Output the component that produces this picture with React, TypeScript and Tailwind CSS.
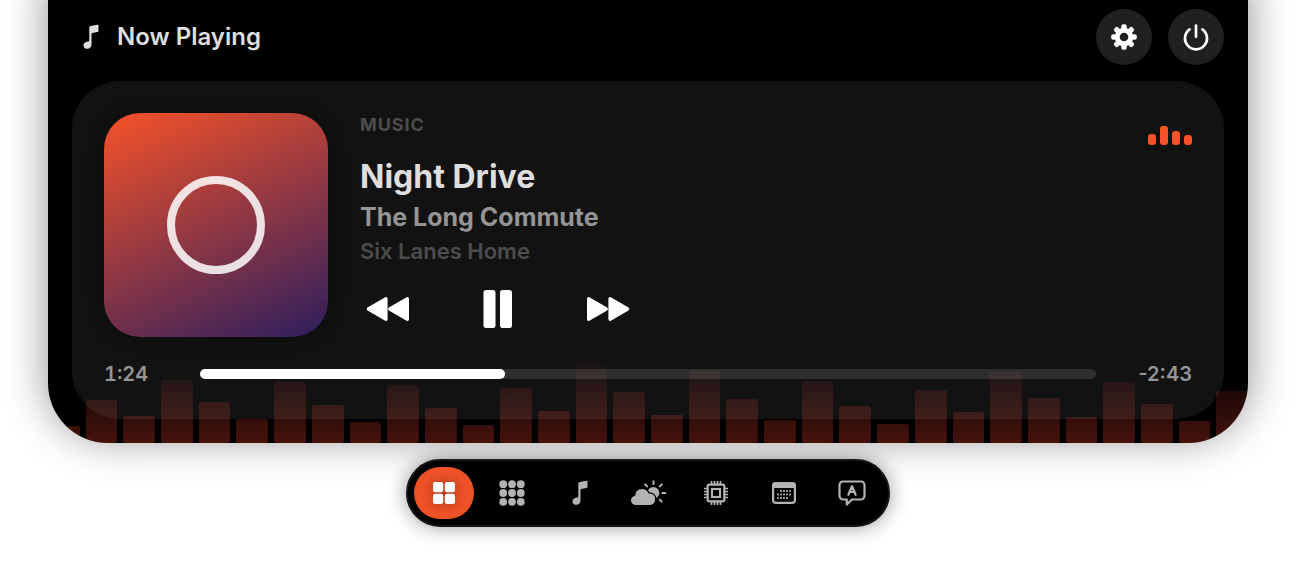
import type { ReactNode } from "react";

const barHeights = [
  17, 43, 27, 63, 41, 24, 61, 38, 21, 58, 35, 18, 55, 32, 80, 51,
  28, 73, 44, 23, 62, 37, 19, 53, 31, 71, 45, 26, 61, 39, 22, 52,
];

function NoteIcon({ className }: { className?: string }) {
  return (
    <svg viewBox="0 0 16 26" className={className} fill="currentColor" aria-hidden="true">
      <path d="M6.300 3.800c0-1 .6-1.600 1.600-1.800l6.200-1.300c.9-.2 1.400.2 1.400 1v5c0 .8-.4 1.200-1.200 1.400l-4.900 1c-.7.200-.9.500-.9 1.200v10c0 2.800-1.700 4.500-4.200 4.500-2.200 0-3.800-1.400-3.800-3.400s1.400-3.200 3.500-3.700l1.400-.3c.7-.2.9-.5.900-1.100z" />
    </svg>
  );
}

function GearIcon() {
  const teeth = [0, 45, 90, 135];
  return (
    <svg viewBox="0 0 26 26" className="size-[26px]" aria-hidden="true">
      {teeth.map((angle) => (
        <rect key={angle} x="10.300" y="0.200" width="5.400" height="25.600" rx="2" fill="white" transform={`rotate(${angle} 13 13)`} />
      ))}
      <circle cx="13" cy="13" r="9.200" fill="white" />
      <circle cx="13" cy="13" r="4.300" fill="#202020" />
    </svg>
  );
}

function PowerIcon() {
  return (
    <svg viewBox="0 0 28 28" className="size-7" fill="none" stroke="white" strokeWidth="2.700" strokeLinecap="round" aria-hidden="true">
      <path d="M14 2.600v11.200" />
      <path d="M7.600 6.400a11 11 0 1 0 12.800 0" />
    </svg>
  );
}

function RewindIcon({ className }: { className?: string }) {
  return (
    <svg viewBox="0 0 44 26" className={className} fill="white" stroke="white" strokeWidth="3.200" strokeLinejoin="round" aria-hidden="true">
      <path d="M2.300 13 20 2.700v20.600zM23.700 13 41.400 2.700v20.600z" />
    </svg>
  );
}

function PauseIcon() {
  return (
    <svg viewBox="0 0 30 38" className="h-[38px] w-[30px]" fill="white" aria-hidden="true">
      <rect x="0.500" y="0" width="12" height="38" rx="2.800" />
      <rect x="17" y="0" width="12" height="38" rx="2.800" />
    </svg>
  );
}

function TilesIcon() {
  return (
    <svg viewBox="0 0 22 22" className="size-[22px] drop-shadow-[0_0_6px_rgba(0,0,0,0.35)]" fill="currentColor" aria-hidden="true">
      <rect width="10.200" height="10.200" rx="2.300" />
      <rect x="11.800" width="10.200" height="10.200" rx="2.300" />
      <rect y="11.800" width="10.200" height="10.200" rx="2.300" />
      <rect x="11.800" y="11.800" width="10.200" height="10.200" rx="2.300" />
    </svg>
  );
}

function DotsIcon() {
  const spots = [4.200, 13, 21.800];
  return (
    <svg viewBox="0 0 26 26" className="size-[26px]" fill="currentColor" aria-hidden="true">
      {spots.map((cy) => spots.map((cx) => <circle key={`${cx}-${cy}`} cx={cx} cy={cy} r="3.900" />))}
    </svg>
  );
}

function WeatherIcon() {
  return (
    <svg viewBox="0 0 36 26" className="h-[26px] w-9" aria-hidden="true">
      <g stroke="currentColor" strokeWidth="2" strokeLinecap="round">
        <path d="M23.500 1.200v2.800M15.200 4.400l1.900 2M31.800 4.400l-2 2M32.400 13h2.800M29.800 19.600l1.900 2" />
      </g>
      <circle cx="23.300" cy="13" r="6" fill="currentColor" />
      <path
        d="M6.300 25.800C2.800 25.800.3 23.600.3 20.500c0-2.600 1.700-4.600 4.200-5.100.5-4.200 3.600-7 7.600-7 3.200 0 5.600 1.600 6.900 4.500 4.100.1 6.900 2.800 6.900 6.400 0 3.700-2.900 6.500-6.800 6.500z"
        fill="currentColor"
        stroke="black"
        strokeWidth="1.400"
      />
    </svg>
  );
}

function ChipIcon() {
  return (
    <svg viewBox="0 0 24 24" className="size-6" fill="none" stroke="currentColor" aria-hidden="true">
      <rect x="3.700" y="3.700" width="16.600" height="16.600" rx="1.500" strokeWidth="2.200" />
      <rect x="8" y="8" width="8" height="8" strokeWidth="2.100" />
      <path
        d="M7.500 0v3M10.500 0v3M13.500 0v3M16.500 0v3M7.500 21v3M10.500 21v3M13.500 21v3M16.500 21v3M0 7.500h3M0 10.500h3M0 13.500h3M0 16.500h3M21 7.500h3M21 10.500h3M21 13.500h3M21 16.500h3"
        strokeWidth="1.700"
      />
    </svg>
  );
}

function CalendarIcon() {
  const rows = [
    { y: 8.500, columns: [9, 12, 15, 18] },
    { y: 12, columns: [6, 9, 12, 15, 18] },
    { y: 15.500, columns: [6, 9, 12, 15] },
  ];
  return (
    <svg viewBox="0 0 24 22" className="h-[22px] w-6" aria-hidden="true">
      <rect x="1.100" y="1.100" width="21.800" height="19.800" rx="3" fill="none" stroke="currentColor" strokeWidth="2.200" />
      <path d="M0 6V4a4 4 0 0 1 4-4h16a4 4 0 0 1 4 4v2z" fill="currentColor" />
      {rows.map((row) =>
        row.columns.map((x) => (
          <rect key={`${x}-${row.y}`} x={x - 0.900} y={row.y - 0.400} width="1.800" height="1.800" fill="currentColor" />
        ))
      )}
    </svg>
  );
}

function CaptionIcon() {
  return (
    <svg viewBox="0 0 28 26" className="h-[26px] w-7" fill="none" stroke="currentColor" strokeWidth="2.200" strokeLinejoin="round" strokeLinecap="round" aria-hidden="true">
      <path d="M5.200 1.500h17.600a3.700 3.700 0 0 1 3.700 3.700v10.600a3.700 3.700 0 0 1-3.700 3.700H14l-5.200 5v-5H5.200a3.700 3.700 0 0 1-3.700-3.700V5.200a3.700 3.700 0 0 1 3.700-3.700z" />
      <path d="M10.300 14.800 14 6.200l3.700 8.600M11.600 12h4.800" />
    </svg>
  );
}

const tabs: { label: string; icon: ReactNode }[] = [
  { label: "Dashboard", icon: <TilesIcon /> },
  { label: "Apps", icon: <DotsIcon /> },
  { label: "Music", icon: <NoteIcon className="h-[26px] w-4" /> },
  { label: "Weather", icon: <WeatherIcon /> },
  { label: "System", icon: <ChipIcon /> },
  { label: "Calendar", icon: <CalendarIcon /> },
  { label: "Captions", icon: <CaptionIcon /> },
];

function Spectrum() {
  return (
    <div className="absolute inset-x-0 bottom-0 flex items-end gap-1.5" aria-hidden="true">
      {barHeights.map((height, index) => (
        <div
          key={index}
          className="flex-1 rounded-xs bg-linear-to-t from-[#f0402f]/29 to-[#f0402f]/0 bg-[length:100%_88px] bg-bottom bg-no-repeat"
          style={{ height }}
        />
      ))}
    </div>
  );
}

export default function App() {
  return (
    <div className="min-h-screen overflow-hidden bg-white px-12 pb-12 font-['Inter',sans-serif]">
      <main className="relative -mt-4 overflow-hidden rounded-b-[60px] bg-black px-6 pt-[25px] pb-6 shadow-[0_-6px_44px_rgba(0,0,0,0.45)]">
        <Spectrum />

        <header className="relative flex items-center justify-between">
          <div className="flex items-center gap-[18px] pl-[11px] text-[#dedede]">
            <NoteIcon className="h-[26px] w-4" />
            <h1 className="text-2xl font-semibold">Now Playing</h1>
          </div>
          <div className="flex gap-4">
            <button type="button" aria-label="Settings" className="flex size-14 items-center justify-center rounded-full bg-[#202020]">
              <GearIcon />
            </button>
            <button type="button" aria-label="Power" className="flex size-14 items-center justify-center rounded-full bg-[#202020]">
              <PowerIcon />
            </button>
          </div>
        </header>

        <section className="relative mt-4 rounded-[48px] bg-white/7 px-8 pt-8 pb-8">
          <div className="flex gap-8">
            <div className="flex size-56 items-center justify-center rounded-[36px] bg-linear-[155deg] from-[#f65228] to-[#2d1e5e] shadow-[0_0_16px_rgba(0,0,0,0.4)]">
              <div className="size-[98px] rounded-full border-8 border-white/85" />
            </div>

            <div className="flex-1">
              <p className="text-lg leading-6 font-bold tracking-wider text-[#4c4c4c]">MUSIC</p>
              <h2 className="mt-5 text-[32px] leading-10 font-bold text-[#dedede]">Night Drive</h2>
              <p className="mt-1 text-[25px] leading-8 font-bold text-[#959595]">The Long Commute</p>
              <p className="mt-1 text-[22px] leading-7 font-semibold text-[#4c4c4c]">Six Lanes Home</p>
              <div className="mt-[25px] flex w-[270px] items-center justify-between">
                <button type="button" aria-label="Previous track" className="pl-1.5">
                  <RewindIcon className="h-[26px] w-11" />
                </button>
                <button type="button" aria-label="Pause">
                  <PauseIcon />
                </button>
                <button type="button" aria-label="Next track">
                  <RewindIcon className="h-[26px] w-11 rotate-180" />
                </button>
              </div>
            </div>

            <div className="flex h-8 items-end gap-1" aria-hidden="true">
              <div className="h-[11px] w-2 rounded-[3px] bg-[#f65228]" />
              <div className="h-[19px] w-2 rounded-[3px] bg-[#f65228]" />
              <div className="h-[14px] w-2 rounded-[3px] bg-[#f65228]" />
              <div className="h-[10px] w-2 rounded-[3px] bg-[#f65228]" />
            </div>
          </div>

          <div className="mt-6 flex items-center text-xl leading-[26px] font-semibold text-[#959595]">
            <span className="w-24 tabular-nums">1:24</span>
            <div className="h-2.5 flex-1 rounded-full bg-white/12" role="progressbar" aria-label="Track position" aria-valuemin={0} aria-valuemax={247} aria-valuenow={84}>
              <div className="h-full rounded-full bg-white" style={{ width: `${(84 / 247) * 100}%` }} />
            </div>
            <span className="w-24 text-right">-2:43</span>
          </div>
        </section>
      </main>

      <nav className="relative mx-auto mt-4 flex w-fit gap-2 rounded-full border-2 border-[#181818] bg-black p-1.5 shadow-[0_0_20px_rgba(0,0,0,0.4)]" aria-label="Widgets">
        {tabs.map((tab, index) => (
          <button
            key={tab.label}
            type="button"
            aria-label={tab.label}
            aria-current={index === 0 ? "page" : undefined}
            className={
              index === 0
                ? "flex h-[52px] w-15 items-center justify-center rounded-full bg-[#f05228] text-white"
                : "flex h-[52px] w-15 items-center justify-center rounded-full text-[#b3b3b3]"
            }
          >
            {tab.icon}
          </button>
        ))}
      </nav>
    </div>
  );
}
